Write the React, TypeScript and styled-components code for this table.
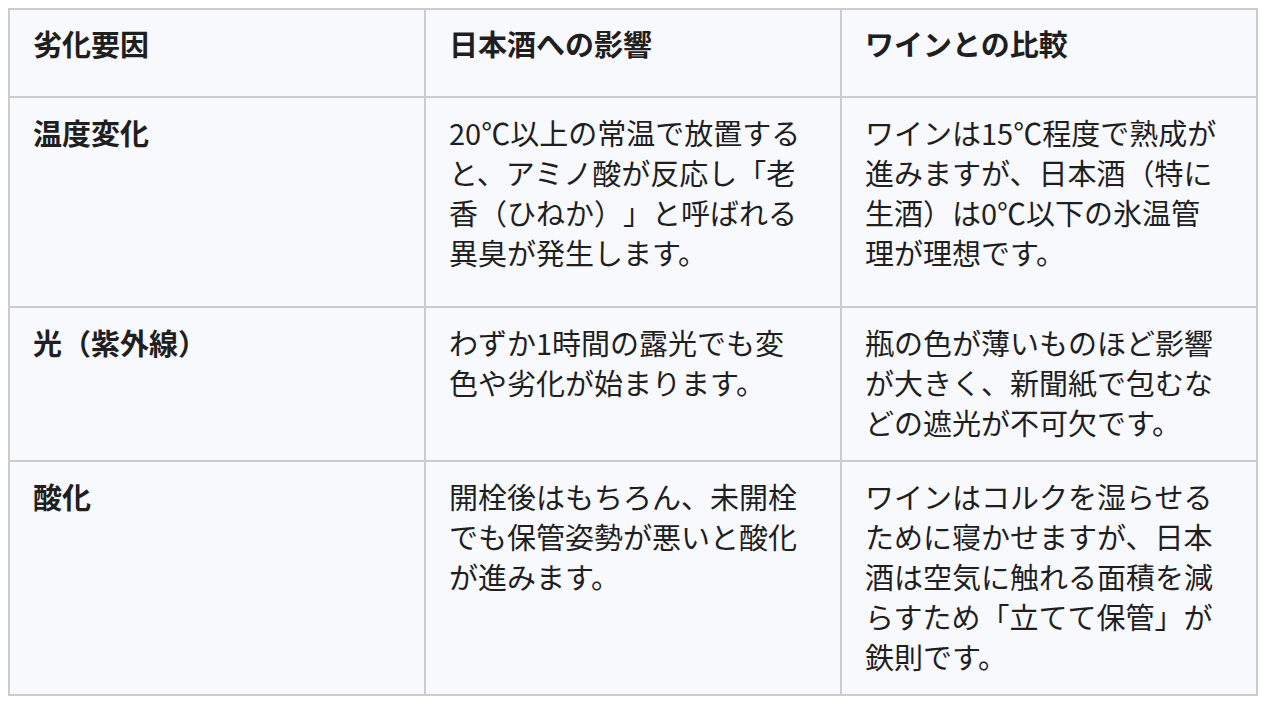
import styled, { createGlobalStyle } from "styled-components";

const GlobalStyle = createGlobalStyle`
  body {
    margin: 8px;
    background: #ffffff;
    font-family: "Noto Sans CJK JP", "Noto Sans", sans-serif;
    color: #1f1f1f;
  }
`;

type Row = {
  factor: string;
  sake: string;
  wine: string;
  tall?: boolean;
};

const rows: Row[] = [
  {
    factor: "温度変化",
    sake: "20℃以上の常温で放置すると、アミノ酸が反応し「老香（ひねか）」と呼ばれる異臭が発生します。",
    wine: "ワインは15℃程度で熟成が進みますが、日本酒（特に生酒）は0℃以下の氷温管理が理想です。",
    tall: true,
  },
  {
    factor: "光（紫外線）",
    sake: "わずか1時間の露光でも変色や劣化が始まります。",
    wine: "瓶の色が薄いものほど影響が大きく、新聞紙で包むなどの遮光が不可欠です。",
  },
  {
    factor: "酸化",
    sake: "開栓後はもちろん、未開栓でも保管姿勢が悪いと酸化が進みます。",
    wine: "ワインはコルクを湿らせるために寝かせますが、日本酒は空気に触れる面積を減らすため「立てて保管」が鉄則です。",
  },
];

const App: React.FC = () => {
  return (
    <>
      <GlobalStyle />
      <Table>
        <colgroup>
          <col style={{ width: "33.33%" }} />
          <col style={{ width: "33.33%" }} />
          <col style={{ width: "33.33%" }} />
        </colgroup>
        <thead>
          <tr>
            <HeadCell>劣化要因</HeadCell>
            <HeadCell>日本酒への影響</HeadCell>
            <HeadCell>ワインとの比較</HeadCell>
          </tr>
        </thead>
        <tbody>
          {rows.map((row) => (
            <tr key={row.factor}>
              <Cell $tall={row.tall} $bold>
                {row.factor}
              </Cell>
              <Cell $tall={row.tall}>{row.sake}</Cell>
              <Cell $tall={row.tall}>{row.wine}</Cell>
            </tr>
          ))}
        </tbody>
      </Table>
    </>
  );
};

export default App;

const Table = styled.table`
  width: 100%;
  border-collapse: collapse;
  table-layout: fixed;
  background: #f8f9fc;
  border: 2px solid #cbcbcd;
  font-size: 29px;
  line-height: 40px;
  text-spacing-trim: space-all;
`;

const HeadCell = styled.th`
  border: 2px solid #cbcbcd;
  padding: 13px 34px 33px 23px;
  text-align: left;
  vertical-align: top;
  font-weight: 700;
`;

const Cell = styled.td<{ $tall?: boolean; $bold?: boolean }>`
  border: 2px solid #cbcbcd;
  padding: 14px 34px ${(p) => (p.$tall ? "34px" : "18px")} 23px;
  vertical-align: top;
  font-weight: ${(p) => (p.$bold ? 700 : 400)};
`;
